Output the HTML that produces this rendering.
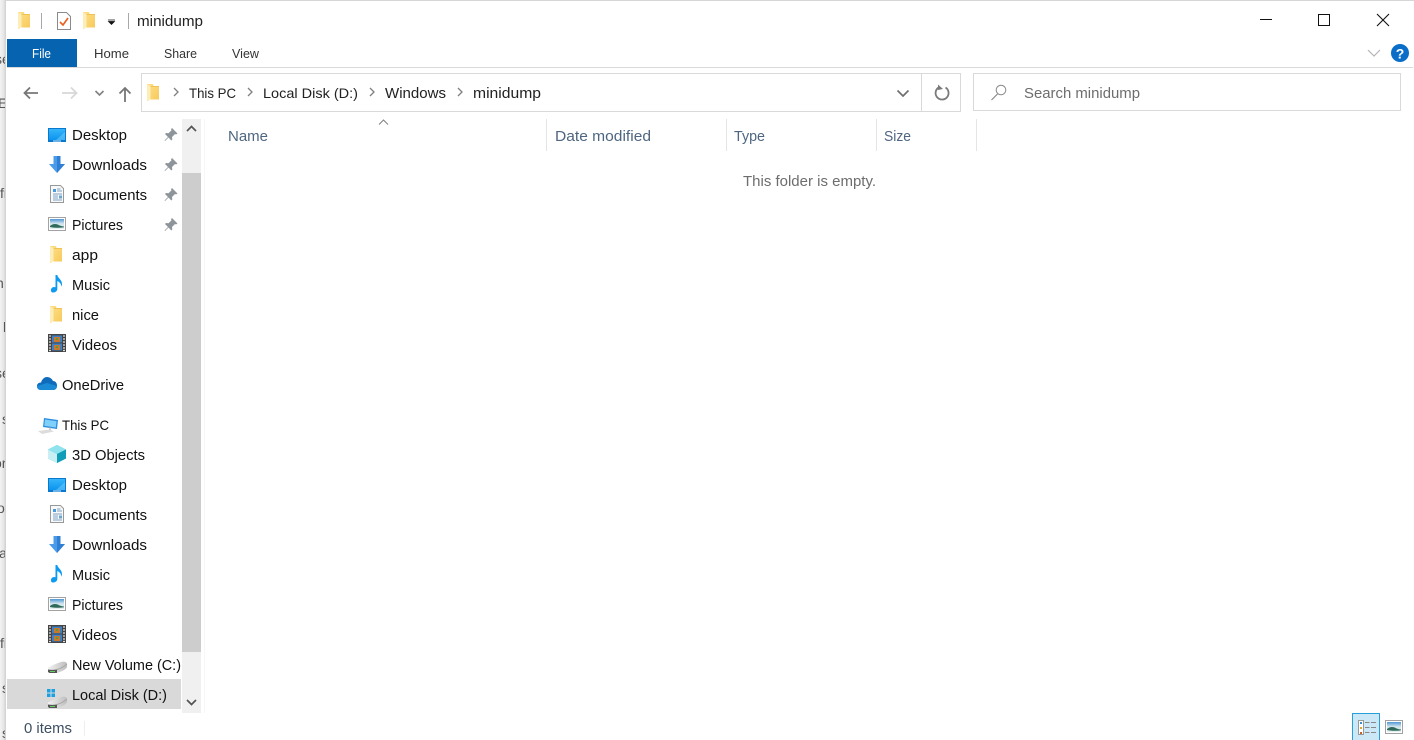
<!DOCTYPE html>
<html><head><meta charset="utf-8"><title>minidump</title>
<style>
html,body{margin:0;padding:0;background:#fff;width:1414px;height:740px;overflow:hidden}
svg{display:block;position:absolute;left:0;top:0}
text{font-family:"Liberation Sans",sans-serif;font-size:14.5px;fill:#111}
.r{font-size:12.5px;fill:#333}
.g{fill:#4f6680}
.m{fill:#6d6d6d}
.t{font-size:13.8px}
</style></head><body>
<svg width="1414" height="740" viewBox="0 0 1414 740" xmlns="http://www.w3.org/2000/svg">
<defs>
<linearGradient id="edge" x1="0" x2="1" y1="0" y2="0"><stop offset="0" stop-color="#f3f3f3"/><stop offset=".6" stop-color="#e6e6e6"/><stop offset="1" stop-color="#cfcfcf"/></linearGradient>
<linearGradient id="sky" x1="0" x2="0" y1="0" y2="1"><stop offset="0" stop-color="#35b4fa"/><stop offset="1" stop-color="#0b93ee"/></linearGradient>
<linearGradient id="pic" x1="0" x2="0" y1="0" y2="1"><stop offset="0" stop-color="#4f97d4"/><stop offset=".45" stop-color="#cfe3ec"/><stop offset="1" stop-color="#e4eef2"/></linearGradient>
<linearGradient id="fold" x1="0" x2="1" y1="0" y2="1"><stop offset="0" stop-color="#fde08a"/><stop offset="1" stop-color="#f7c95a"/></linearGradient>
<linearGradient id="hdd" x1="0" x2="1" y1="0" y2="0"><stop offset="0" stop-color="#f2f2f2"/><stop offset="1" stop-color="#bdbdbd"/></linearGradient>
<symbol id="folder" overflow="visible"><path d="M0 0h6l.5 2H12v13.500H2V17H0z" fill="url(#fold)"/><path d="M0 .5l3.500 1.500v13.500L2 15.800V17H.5L0 16.500z" fill="#fdeeb8"/><path d="M3.500 2L12 2v.8H3.500z" fill="#eebd4c"/></symbol>
<symbol id="desk" overflow="visible"><rect x="0" y="0" width="18" height="14" fill="#0a78cc"/><rect x="1" y="1" width="16" height="11" fill="url(#sky)"/><path d="M8 12L17 4v8z" fill="#8ad6fb" opacity=".45"/><rect x="5" y="12.500" width="8" height="1" fill="#cfeaff"/></symbol>
<symbol id="dl" overflow="visible"><path d="M4.500 0h7v8H16l-8 9-8-9h4.500z" fill="#4a9bea"/><path d="M8 0h3.500v8H16l-8 9z" fill="#2f80d4"/></symbol>
<symbol id="doc" overflow="visible"><path d="M.5.500h10l3 3v14H.5z" fill="#f8f8f8" stroke="#999"/><path d="M3 4h3v3H3z" fill="#4a98dc"/><path d="M7 4h3.500M7 6h5M3 9h9M3 11h5M3 13h5M3 15h9" stroke="#7ea4c8" stroke-width="1"/><rect x="9" y="10.500" width="3" height="3" fill="#6aa8d4"/></symbol>
<symbol id="pics" overflow="visible"><rect x=".5" y=".5" width="17" height="13" fill="#fff" stroke="#a2a2a2"/><rect x="2" y="2" width="14" height="10" fill="url(#pic)"/><path d="M2 9c3-2.500 6-2.500 9-.8 2 .8 3.500 1 5 1.300v.7c-4 .8-9 .8-14-.2z" fill="#2f6a58"/></symbol>
<symbol id="music" overflow="visible"><path d="M4.500 0h1.800c.3 3 4.700 4.500 4.700 9 0 1-.3 2-.7 2.700.1-3-2.200-5-4-5.700V14c0 2-2 3.500-4 3.500S0 16.500 0 15c0-2 2-3 3.200-3 .5 0 1 .1 1.300.3z" fill="#0d9af0"/></symbol>
<symbol id="vid" overflow="visible"><rect width="18" height="18" fill="#444"/><rect x="4" y="1.500" width="10" height="7" fill="#3f7fc4"/><rect x="4" y="9.500" width="10" height="7" fill="#3f7fc4"/><rect x="6" y="3" width="6" height="5" fill="#c9772c"/><rect x="6" y="11" width="6" height="5" fill="#c9772c"/><rect x="8" y="4" width="2" height="2" fill="#5d9a3a"/><rect x="8" y="12" width="2" height="2" fill="#5d9a3a"/><path d="M1 2h2M1 5h2M1 8h2M1 11h2M1 14h2M1 16.500h2M15 2h2M15 5h2M15 8h2M15 11h2M15 14h2M15 16.500h2" stroke="#ddd" stroke-width="1.200"/></symbol>
<symbol id="drive" overflow="visible"><path d="M0 7.500C3 6 8 3.500 13 2c2.500-.7 5-.5 6 1.500V7c-1 2-3 3-6 4.500l-4 1.500H1.500L0 11.500z" fill="url(#hdd)"/><path d="M0 9.500c3 .5 6 .5 9 0V13H1.500L0 12z" fill="#555"/><path d="M2 11.500h5" stroke="#66cc66"/><path d="M9 9.500c3-.8 7-3 10-5.500" fill="none" stroke="#a8a8a8"/></symbol>
<symbol id="pin" overflow="visible"><path d="M7 0l5.500 5.500-1.500 1-1-.5-3 3 .3 2.500-1 1L3.500 9.500 0 13l-.5-.5L3 9 0 6l1-1 2.500.3 3-3-.5-1z" fill="#8d959b"/></symbol>
</defs>

<rect width="1414" height="740" fill="#fff"/>

<!-- left edge desktop sliver -->
<rect x="0" y="0" width="6" height="740" fill="url(#edge)"/>
<svg x="0" y="0" width="5" height="740">
<text x="-5" y="64" style="fill:#555;font-size:14px">se</text>
<text x="-2" y="108" style="fill:#555;font-size:14px">Er</text>
<text x="0" y="198" style="fill:#555;font-size:14px">fi</text>
<text x="-4" y="288" style="fill:#555;font-size:14px">n</text>
<text x="3" y="332" style="fill:#555;font-size:14px">k</text>
<text x="-5" y="378" style="fill:#555;font-size:14px">se</text>
<text x="2" y="424" style="fill:#555;font-size:14px">s</text>
<text x="-6" y="468" style="fill:#555;font-size:14px">or</text>
<text x="-3" y="513" style="fill:#555;font-size:14px">o</text>
<text x="-4" y="558" style="fill:#555;font-size:14px">la</text>
<text x="0" y="648" style="fill:#555;font-size:14px">fi</text>
<text x="2" y="693" style="fill:#555;font-size:14px">s</text>
<text x="2" y="738" style="fill:#555;font-size:14px">s</text>
</svg>
<rect x="6" y="0" width="1408" height="1" fill="#d6d6d6"/>

<!-- title bar -->
<use href="#folder" x="18" y="12"/>
<rect x="41" y="13" width="1" height="16" fill="#a8a8a8"/>
<path d="M57.500 12.500h9l4 4v13h-13z" fill="#fff" stroke="#8a8a8a"/>
<path d="M60 22l3 3 5-7" fill="none" stroke="#e8601f" stroke-width="1.700"/>
<use href="#folder" x="83" y="12"/>
<path d="M108 20h7M108.500 21.500h6l-3 3z" fill="#111" stroke="#111" stroke-width=".7"/>
<rect x="128" y="13" width="1" height="16" fill="#a8a8a8"/>
<text x="137" y="26" textLength="66" lengthAdjust="spacingAndGlyphs" style="fill:#222">minidump</text>

<path d="M1260 19.500h12" stroke="#111"/>
<rect x="1318.500" y="14.500" width="11" height="11" fill="none" stroke="#111"/>
<path d="M1377 14l12 12M1389 14l-12 12" stroke="#111" stroke-width="1.100"/>

<!-- ribbon tabs -->
<rect x="7" y="39" width="70" height="28" fill="#0563af"/>
<text class="r" x="32" y="58" textLength="19" lengthAdjust="spacingAndGlyphs" style="fill:#fff">File</text>
<text class="r" x="94" y="58" textLength="35" lengthAdjust="spacingAndGlyphs">Home</text>
<text class="r" x="164" y="58" textLength="33" lengthAdjust="spacingAndGlyphs">Share</text>
<text class="r" x="232" y="58" textLength="27" lengthAdjust="spacingAndGlyphs">View</text>
<rect x="7" y="67" width="1406" height="1" fill="#dadada"/>
<path d="M1368 50l6 6 6-6" fill="none" stroke="#b5b5b5" stroke-width="1.200"/>
<circle cx="1400" cy="53" r="9" fill="#0a6ec8"/>
<text x="1400" y="58.500" text-anchor="middle" style="fill:#fff;font-size:14px;font-weight:bold">?</text>

<!-- nav arrows -->
<path d="M38 93H25M30 87.500L24.500 93l5.500 5.500" fill="none" stroke="#777" stroke-width="1.800"/>
<path d="M62 93h14M71 87.500l5.500 5.500-5.500 5.500" fill="none" stroke="#d8d8d8" stroke-width="1.800"/>
<path d="M95.500 91l4 4 4-4" fill="none" stroke="#808080" stroke-width="1.600"/>
<path d="M125 102V88M119.500 93.500L125 88l5.500 5.500" fill="none" stroke="#777" stroke-width="1.800"/>

<!-- address bar -->
<rect x="141.500" y="73.500" width="819" height="38" fill="#fff" stroke="#d9d9d9"/>
<rect x="921" y="74" width="1" height="37" fill="#d9d9d9"/>
<use href="#folder" x="147" y="84"/>
<g fill="none" stroke="#808080" stroke-width="1.300">
<path d="M174 88l4 4-4 4"/><path d="M248 88l4 4-4 4"/><path d="M370 88l4 4-4 4"/><path d="M458 88l4 4-4 4"/>
</g>
<text class="t" x="189" y="98" textLength="47" lengthAdjust="spacingAndGlyphs" style="fill:#222">This PC</text>
<text class="t" x="263" y="98" textLength="95" lengthAdjust="spacingAndGlyphs" style="fill:#222">Local Disk (D:)</text>
<text x="385" y="98" textLength="61" lengthAdjust="spacingAndGlyphs" style="fill:#222">Windows</text>
<text x="473" y="98" textLength="68" lengthAdjust="spacingAndGlyphs" style="fill:#222">minidump</text>
<path d="M897.500 90.500l5.500 5.500 5.500-5.500" fill="none" stroke="#707070" stroke-width="1.700"/>
<path d="M945.500 87.500a6.500 6.500 0 1 1-6.500-.2" fill="none" stroke="#7a7a7a" stroke-width="1.800"/>
<path d="M938 84.500v5.500l5-1z" fill="#7a7a7a"/>

<!-- search -->
<rect x="973.500" y="73.500" width="427" height="37" fill="#fff" stroke="#d9d9d9"/>
<circle cx="1001" cy="90" r="4.800" fill="none" stroke="#8a8a8a"/>
<path d="M997.500 94L991.500 100" stroke="#8a8a8a" stroke-width="1.200"/>
<text x="1024" y="98" textLength="116" lengthAdjust="spacingAndGlyphs" class="m">Search minidump</text>

<!-- column header -->
<path d="M379 124.500l4.500-4.500 4.500 4.500" fill="none" stroke="#808080"/>
<text class="g" x="228" y="141" textLength="40" lengthAdjust="spacingAndGlyphs">Name</text>
<text class="g" x="555" y="141" textLength="96" lengthAdjust="spacingAndGlyphs">Date modified</text>
<text class="g" x="734" y="141" textLength="31" lengthAdjust="spacingAndGlyphs">Type</text>
<text class="g" x="884" y="141" textLength="27" lengthAdjust="spacingAndGlyphs">Size</text>
<g fill="#e5e5e5"><rect x="546" y="119" width="1" height="32"/><rect x="726" y="119" width="1" height="32"/><rect x="876" y="119" width="1" height="32"/><rect x="976" y="119" width="1" height="32"/></g>
<text class="m" x="743" y="186" textLength="133" lengthAdjust="spacingAndGlyphs">This folder is empty.</text>

<!-- nav pane -->
<rect x="7" y="679" width="174" height="30" fill="#d9d9d9"/>
<rect x="182" y="119" width="19" height="594" fill="#f0f0f0"/>
<rect x="182" y="173" width="19" height="479" fill="#cdcdcd"/>
<path d="M187 131l4.500-4.500 4.500 4.500" fill="none" stroke="#555" stroke-width="1.700"/>
<path d="M187 700l4.500 4.500 4.500-4.500" fill="none" stroke="#555" stroke-width="1.700"/>
<rect x="204" y="119" width="1" height="594" fill="#f7f7f7"/>

<use href="#desk" x="48" y="128"/>
<use href="#dl" x="49" y="156"/>
<use href="#doc" x="50" y="185"/>
<use href="#pics" x="48" y="217"/>
<use href="#folder" x="50" y="246"/>
<use href="#music" x="51" y="275"/>
<use href="#folder" x="50" y="306"/>
<use href="#vid" x="48" y="334"/>
<use href="#pin" x="165" y="128"/>
<use href="#pin" x="165" y="158"/>
<use href="#pin" x="165" y="188"/>
<use href="#pin" x="165" y="218"/>

<text x="72" y="140" textLength="55" lengthAdjust="spacingAndGlyphs">Desktop</text>
<text x="72" y="170" textLength="75" lengthAdjust="spacingAndGlyphs">Downloads</text>
<text x="72" y="200" textLength="75" lengthAdjust="spacingAndGlyphs">Documents</text>
<text x="72" y="230" textLength="51" lengthAdjust="spacingAndGlyphs">Pictures</text>
<text x="72" y="260" textLength="26" lengthAdjust="spacingAndGlyphs">app</text>
<text x="72" y="290" textLength="38" lengthAdjust="spacingAndGlyphs">Music</text>
<text x="72" y="320" textLength="27" lengthAdjust="spacingAndGlyphs">nice</text>
<text x="72" y="350" textLength="45" lengthAdjust="spacingAndGlyphs">Videos</text>

<path d="M41 390c-3 0-4-2-4-4 0-2 1.500-3.500 4-3.500 1-3 3-5.500 6-5.500 3 0 5 2 6 4 2.500 0 4 2 4 4.500 0 2.500-1.500 4.500-4 4.500z" fill="#0f6cbd"/>
<path d="M41 390c-3 0-4-2-4-4l10-3 10 3c0 2.500-1.500 4-4 4z" fill="#1a8ad4"/>
<text x="62" y="390" textLength="62" lengthAdjust="spacingAndGlyphs">OneDrive</text>

<path d="M44 418l14 2-1 9-14-2z" fill="#2e8fe0"/><path d="M45 419.500l11.500 1.700-.7 6.300-11.500-1.700z" fill="#7fd0fa"/>
<path d="M38 431l12-1.500 4 2-12 2.500z" fill="#dcdcdc"/><path d="M50 427v3" stroke="#aaa"/>
<text class="t" x="62" y="430" textLength="47" lengthAdjust="spacingAndGlyphs">This PC</text>

<path d="M57 445l9 4.500v9L57 463l-9-4.500v-9z" fill="#3cc0dc"/><path d="M48 449.500l9 4.500 9-4.500-9-4.500z" fill="#8fe3ee"/><path d="M48 449.500l9 4.500v9l-9-4.500z" fill="#c8eff3"/><path d="M57 454l9-4.500v9L57 463z" fill="#119db8"/>
<use href="#desk" x="48" y="478"/>
<use href="#doc" x="50" y="505"/>
<use href="#dl" x="49" y="536"/>
<use href="#music" x="51" y="565"/>
<use href="#pics" x="48" y="597"/>
<use href="#vid" x="48" y="625"/>
<use href="#drive" x="48" y="660"/>
<use href="#drive" x="48" y="695"/>
<g fill="#1ba1e2"><rect x="47" y="689" width="3.500" height="3.500"/><rect x="51.500" y="689" width="3.500" height="3.500"/><rect x="47" y="693.500" width="3.500" height="3.500"/><rect x="51.500" y="693.500" width="3.500" height="3.500"/></g>

<text x="72" y="460" textLength="73" lengthAdjust="spacingAndGlyphs">3D Objects</text>
<text x="72" y="490" textLength="55" lengthAdjust="spacingAndGlyphs">Desktop</text>
<text x="72" y="520" textLength="75" lengthAdjust="spacingAndGlyphs">Documents</text>
<text x="72" y="550" textLength="75" lengthAdjust="spacingAndGlyphs">Downloads</text>
<text x="72" y="580" textLength="38" lengthAdjust="spacingAndGlyphs">Music</text>
<text x="72" y="610" textLength="51" lengthAdjust="spacingAndGlyphs">Pictures</text>
<text x="72" y="640" textLength="45" lengthAdjust="spacingAndGlyphs">Videos</text>
<text x="72" y="670" textLength="109" lengthAdjust="spacingAndGlyphs">New Volume (C:)</text>
<text x="72" y="700" textLength="95" lengthAdjust="spacingAndGlyphs">Local Disk (D:)</text>

<!-- status bar -->
<text x="24" y="733" textLength="48" lengthAdjust="spacingAndGlyphs" style="fill:#3f4f63">0 items</text>
<rect x="84" y="721" width="1" height="15" fill="#eeeeee"/>
<rect x="1352.500" y="713.500" width="27" height="28" fill="#cce8f6" stroke="#26a0da"/>
<rect x="1358.500" y="720.500" width="5" height="14" fill="#fff" stroke="#999"/>
<rect x="1360" y="722" width="2" height="2" fill="#3a8fd8"/><rect x="1360" y="727" width="2" height="2" fill="#d8a93a"/><rect x="1360" y="732" width="2" height="2" fill="#c8632c"/>
<path d="M1365 722.500h4.500M1371 722.500h5M1365 727.500h4.500M1371 727.500h5M1365 732.500h4.500M1371 732.500h5" stroke="#888"/>
<rect x="1385.500" y="720.500" width="17" height="13" fill="#fff" stroke="#a0a0a0"/>
<rect x="1387" y="722" width="14" height="10" fill="url(#pic)"/>
<path d="M1387 729c3-2.500 6-2.500 9-.8 2 .8 3.500 1 5 1.300v.7c-4 .8-9 .8-14-.2z" fill="#2f6a58"/>
</svg>
</body></html>
